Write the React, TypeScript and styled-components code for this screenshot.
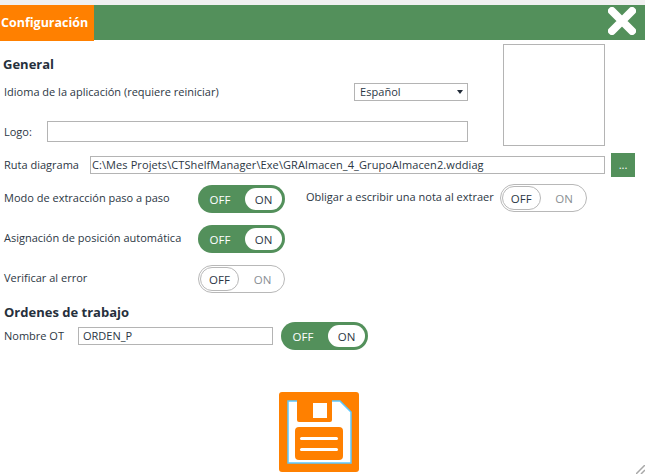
import React from "react";
import styled, { createGlobalStyle } from "styled-components";

const Global = createGlobalStyle`
  html, body { margin: 0; padding: 0; background: #fff; }
  body { width: 645px; height: 474px; overflow: hidden; font-family: "Open Sans", "Noto Sans", sans-serif; font-size: 11px; color: #2c3744; }
  * { box-sizing: border-box; }
`;

const Page = styled.div`
  position: relative;
  width: 645px;
  height: 474px;
  padding-top: 5px;
  background: linear-gradient(#f0f0f0 5px, #fff 5px);
`;
const Header = styled.header`
  display: flex;
  align-items: flex-start;
  height: 35px;
  background: #53905b;
`;
const Tab = styled.div`
  width: 94px;
  height: 36px;
  padding-left: 1px;
  background: #ff8000;
  color: #fff;
  font-weight: 700;
  font-size: 12.5px;
  line-height: 35px;
`;
const CloseIcon = styled.svg`
  display: block;
  width: 28px;
  height: 28px;
  margin: 2px 9px 0 auto;
`;
const Top = styled.div`
  display: flex;
  align-items: flex-start;
`;
const TopLeft = styled.div`
  width: 468px;
`;
const SectionTitle = styled.h2<{ $top: number; $left: number }>`
  margin: ${(p) => p.$top}px 0 0 ${(p) => p.$left}px;
  height: 16px;
  font-size: 13px;
  line-height: 16px;
  font-weight: 700;
  color: #26303c;
`;
const LanguageRow = styled.div`
  display: flex;
  justify-content: space-between;
  align-items: center;
  height: 18px;
  margin-top: 11px;
  padding-left: 4px;
`;
const Select = styled.div`
  display: flex;
  justify-content: space-between;
  align-items: center;
  width: 114px;
  height: 18px;
  padding: 0 4px 2px 5px;
  border: 1px solid #b4b4b4;
  font-size: 11px;
  letter-spacing: 0.05px;
`;
const Caret = styled.span`
  width: 0;
  height: 0;
  margin-top: 2px;
  border-left: 3.5px solid transparent;
  border-right: 3.5px solid transparent;
  border-top: 4px solid #222c38;
`;
const LogoRow = styled.div`
  display: flex;
  align-items: center;
  height: 21px;
  margin-top: 20px;
  padding-left: 4px;
`;
const Label = styled.span<{ $width?: number; $raised?: boolean }>`
  flex: 0 0 ${(p) => (p.$width ? `${p.$width}px` : "auto")};
  padding-bottom: ${(p) => (p.$raised ? "2px" : "0")};
  white-space: nowrap;
`;
const TextBox = styled.input<{ $width: number; $height: number; $pad: number; $spacing?: number }>`
  display: block;
  width: ${(p) => p.$width}px;
  height: ${(p) => p.$height}px;
  padding: 0 ${(p) => p.$pad}px 2px;
  border: 1px solid #b4b4b4;
  border-radius: 0;
  outline: none;
  background: #fff;
  color: #2c3744;
  font: inherit;
  letter-spacing: ${(p) => p.$spacing ?? 0}px;
`;
const LogoBox = styled.div`
  width: 102px;
  height: 102px;
  margin: 4px 0 0 35px;
  border: 1px solid #b4b4b4;
`;
const PathRow = styled.div`
  display: flex;
  align-items: center;
  height: 24px;
  margin-top: 7px;
  padding-left: 4px;
`;
const BrowseButton = styled.button`
  width: 24px;
  height: 24px;
  margin-left: 6px;
  padding: 0;
  border: none;
  background: #53905b;
  color: #fff;
  font: inherit;
  line-height: 24px;
`;
const ToggleRow = styled.div<{ $top: number; $height?: number }>`
  display: flex;
  align-items: ${(p) => (p.$height ? "flex-end" : "center")};
  height: ${(p) => p.$height ?? 28}px;
  margin-top: ${(p) => p.$top}px;
  padding-left: 4px;
`;
const ToggleLabel = styled.span<{ $width: number }>`
  flex: 0 0 ${(p) => p.$width}px;
  align-self: center;
  margin-top: -3px;
  white-space: nowrap;
`;
const SecondGroup = styled.div`
  display: flex;
  align-self: flex-start;
  align-items: center;
  height: 28px;
  margin-left: 21px;
`;
const SecondLabel = styled.span`
  margin-right: 6px;
  white-space: nowrap;
  margin-top: -3px;
`;
const ToggleShell = styled.div<{ $on: boolean }>`
  display: flex;
  flex: 0 0 87px;
  width: 87px;
  height: 28px;
  padding: ${(p) => (p.$on ? "3px" : "1px")};
  border-radius: 14px;
  border: ${(p) => (p.$on ? "none" : "1px solid #b8b8b8")};
  background: ${(p) => (p.$on ? "#53905b" : "#fff")};
`;
const OffCell = styled.span<{ $on: boolean }>`
  display: flex;
  flex: ${(p) => (p.$on ? "1" : "0 0 39px")};
  align-items: center;
  justify-content: center;
  padding-right: ${(p) => (p.$on ? "6px" : "0")};
  border-radius: 12px;
  border: ${(p) => (p.$on ? "none" : "1px solid #b8b8b8")};
  background: ${(p) => (p.$on ? "transparent" : "#fff")};
  color: ${(p) => (p.$on ? "#fff" : "#2c3744")};
  font-size: 11.5px;
`;
const OnCell = styled.span<{ $on: boolean }>`
  display: flex;
  flex: ${(p) => (p.$on ? "0 0 37px" : "1")};
  align-items: center;
  justify-content: center;
  padding-left: ${(p) => (p.$on ? "0" : "3px")};
  border-radius: 12px;
  background: ${(p) => (p.$on ? "#fff" : "transparent")};
  color: ${(p) => (p.$on ? "#2c3744" : "#8a8f94")};
  font-size: 11.5px;
`;
const OrderGap = styled.span`
  flex: 0 0 8px;
`;
const SaveRow = styled.div`
  display: flex;
  margin-top: 42px;
  padding-left: 279px;
`;
const SaveIcon = styled.svg`
  display: block;
  width: 80px;
  height: 80px;
`;
const Grip = styled.svg`
  position: absolute;
  right: 0;
  bottom: 0;
  width: 9px;
  height: 9px;
`;

const Toggle = ({ on }: { on: boolean }) => (
  <ToggleShell $on={on}>
    <OffCell $on={on}>OFF</OffCell>
    <OnCell $on={on}>ON</OnCell>
  </ToggleShell>
);

export default function App() {
  return (
    <Page>
      <Global />
      <Header>
        <Tab>Configuración</Tab>
        <CloseIcon viewBox="0 0 28 28">
          <path d="M4 4 L24 24 M24 4 L4 24" stroke="#fff" strokeWidth="8" strokeLinecap="round" fill="none" />
        </CloseIcon>
      </Header>
      <Top>
        <TopLeft>
          <SectionTitle $top={16} $left={3}>General</SectionTitle>
          <LanguageRow>
            <Label $raised>Idioma de la aplicación (requiere reiniciar)</Label>
            <Select>
              Español
              <Caret />
            </Select>
          </LanguageRow>
          <LogoRow>
            <Label $width={43}>Logo:</Label>
            <TextBox $width={421} $height={21} $pad={4} readOnly value="" />
          </LogoRow>
        </TopLeft>
        <LogoBox />
      </Top>
      <PathRow>
        <Label $width={86} $raised>Ruta diagrama</Label>
        <TextBox $width={515} $height={18} $pad={1} $spacing={0.09} readOnly value="C:\Mes Projets\CTShelfManager\Exe\GRAlmacen_4_GrupoAlmacen2.wddiag" />
        <BrowseButton>...</BrowseButton>
      </PathRow>
      <ToggleRow $top={7} $height={29}>
        <ToggleLabel $width={194}>Modo de extracción paso a paso</ToggleLabel>
        <Toggle on />
        <SecondGroup>
          <SecondLabel>Obligar a escribir una nota al extraer</SecondLabel>
          <Toggle on={false} />
        </SecondGroup>
      </ToggleRow>
      <ToggleRow $top={12}>
        <ToggleLabel $width={194}>Asignación de posición automática</ToggleLabel>
        <Toggle on />
      </ToggleRow>
      <ToggleRow $top={12}>
        <ToggleLabel $width={194}>Verificar al error</ToggleLabel>
        <Toggle on={false} />
      </ToggleRow>
      <SectionTitle $top={11} $left={4}>Ordenes de trabajo</SectionTitle>
      <ToggleRow $top={2}>
        <Label $width={74} $raised>Nombre OT</Label>
        <TextBox $width={195} $height={18} $pad={4} readOnly value="ORDEN_P" />
        <OrderGap />
        <Toggle on />
      </ToggleRow>
      <SaveRow>
        <SaveIcon viewBox="0 0 80 80">
          <rect width="80" height="80" rx="3" fill="#ff8000" />
          <path d="M9 9 H61 L72 20 V71 H9 Z" fill="#fff" stroke="#5cc8ff" strokeWidth="1.5" />
          <path d="M18 8 H53 V28 Q53 30 51 30 H20 Q18 30 18 28 Z" fill="#ff8000" />
          <rect x="34" y="11" width="14" height="15" fill="#fff" />
          <rect x="16" y="35" width="48" height="33" rx="4" fill="#ff8000" />
          <rect x="21" y="45" width="38" height="3" rx="1.5" fill="#fff" />
          <rect x="21" y="56" width="38" height="3" rx="1.5" fill="#fff" />
        </SaveIcon>
      </SaveRow>
      <Grip viewBox="0 0 9 9">
        <path d="M0 9 L9 0 M5 9 L9 5" stroke="#a8a8a8" strokeWidth="1.5" fill="none" />
      </Grip>
    </Page>
  );
}
